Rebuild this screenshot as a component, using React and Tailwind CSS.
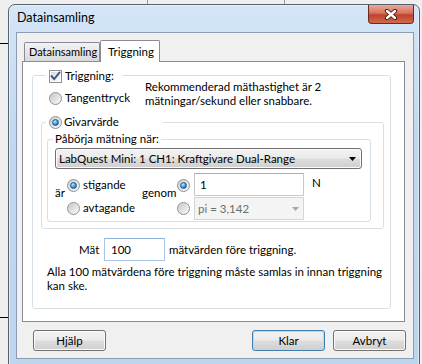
import React from "react";

function Radio({ checked }) {
  return (
    <span className="flex h-[13px] w-[13px] shrink-0 items-center justify-center rounded-full border border-[#8e8f8f] bg-[linear-gradient(135deg,#cfcfcf,#fbfbfb)]">
      {checked ? (
        <span className="h-[7px] w-[7px] rounded-full border border-[#1b5996] bg-[radial-gradient(circle_at_35%_30%,#c4ecff,#3c95dc_55%,#125496)]" />
      ) : (
        <span className="h-[9px] w-[9px] rounded-full bg-[linear-gradient(135deg,#c9c9c9,#f6f6f6)]" />
      )}
    </span>
  );
}

function Checkbox() {
  return (
    <span className="flex h-[13px] w-[13px] shrink-0 items-center justify-center border border-[#8e8f8f] bg-white">
      <span className="relative h-[9px] w-[9px] bg-[linear-gradient(135deg,#d8d8d8,#fbfbfb)]">
        <svg className="absolute left-[-1px] top-[-1px]" width="11" height="11" viewBox="0 0 11 11">
          <path d="M1.6 5.2 L4.2 8 L9.4 1.6" fill="none" stroke="#3d5689" strokeWidth="1.9" strokeLinecap="square" />
        </svg>
      </span>
    </span>
  );
}

function Button({ children, def }) {
  return (
    <div
      className={
        "flex h-[21px] w-[73px] items-center justify-center rounded-[3px] border bg-[linear-gradient(180deg,#f2f2f2_0%,#ebebeb_48%,#dddddd_52%,#cfcfcf_100%)] leading-[14px] " +
        (def
          ? "border-[#3c7fb1] shadow-[inset_0_0_0_1px_#a6e1fb]"
          : "border-[#707070] shadow-[inset_0_0_0_1px_#fbfbfb]")
      }
    >
      {children}
    </div>
  );
}

export default function App() {
  return (
    <div className="relative h-[364px] w-[422px] overflow-hidden whitespace-nowrap bg-[#efefef] text-[11.5px] text-black [font-family:Lato,sans-serif]">
      <div className="absolute left-[147px] top-0 h-[5px] w-px bg-[#9a9a9a]" />
      <div className="absolute left-[284px] top-0 h-[5px] w-px bg-[#9a9a9a]" />
      <div className="absolute left-0 top-[43px] h-px w-[8px] bg-black" />
      <div className="absolute left-0 top-[317px] h-px w-[8px] bg-black" />

      <div className="absolute left-[8px] top-[4px] flex h-[362px] w-[412px] flex-col rounded-t-[7px] border border-[#56626f] bg-[linear-gradient(180deg,#d4e5f7_0%,#c3d8f0_35%,#bed5ee_100%)] pl-[7px] pr-[5px] shadow-[inset_0_0_0_1px_rgba(255,255,255,0.45)]">
        <div className="flex h-[27px] items-start justify-between">
          <span className="pl-[1px] pt-[5px] text-[12.5px] leading-[16px]">Datainsamling</span>
          <div className="flex h-[19px] w-[46px] items-center justify-center rounded-b-[4px] border border-t-0 border-[#6a2a20] bg-[linear-gradient(180deg,#e9a99a_0%,#d7735e_45%,#c0412b_55%,#d06a4f_100%)]">
            <svg width="14" height="11" viewBox="0 0 14 11">
              <path d="M3 2 L11 9 M11 2 L3 9" stroke="#3a1812" strokeWidth="4.2" strokeLinecap="round" />
              <path d="M3 2 L11 9 M11 2 L3 9" stroke="#ffffff" strokeWidth="2.4" strokeLinecap="round" />
            </svg>
          </div>
        </div>

        <div className="flex h-[327px] flex-col border border-[#8d9db1] bg-[#f0f0f0] pt-[7px]">
          {/* tabs */}
          <div className="flex h-[21px] items-end pl-[7px]">
            <div className="flex h-[19px] w-[76px] items-center overflow-hidden rounded-t-[2px] border border-b-0 border-[#898c95] bg-[linear-gradient(180deg,#f3f3f3,#e6e6e6_50%,#d9d9d9)] pl-[4px] text-[11px] leading-[14px]">
              Datainsamling
            </div>
            <div className="relative z-10 mb-[-1px] flex h-[22px] w-[60px] items-center rounded-t-[2px] border border-b-0 border-[#898c95] bg-white pl-[7px] leading-[14px]">
              Triggning
            </div>
          </div>

          {/* panel */}
          <div className="ml-[5px] h-[261px] w-[383px] border border-[#898c95] bg-white">
            <div className="relative ml-[9px] mt-[13px] h-[234px] w-[359px] rounded-[3px] border border-[#d5dfe5]">
              <div className="absolute left-[13px] top-[-7px] flex h-[14px] items-center gap-[3px] bg-white pl-[3px] pr-[8px] leading-[14px]">
                <Checkbox />
                <span>Triggning:</span>
              </div>

              <div className="mt-[4px] flex">
                <div className="ml-[16px] mt-[11px] flex h-[14px] w-[96px] items-center gap-[3px] leading-[14px]">
                  <Radio />
                  <span>Tangenttryck</span>
                </div>
                <div className="leading-[14px]">
                  Rekommenderad mäthastighet är 2
                  <br />
                  mätningar/sekund eller snabbare.
                </div>
              </div>

              <div className="relative ml-[8px] mt-[14px] h-[107px] w-[343px] rounded-[3px] border border-[#d5dfe5]">
                <div className="absolute left-[4px] top-[-8px] flex h-[14px] w-[117px] items-center gap-[2px] bg-white pl-[3px] leading-[14px]">
                  <Radio checked />
                  <span>Givarvärde</span>
                </div>

                <div className="relative ml-[5px] mt-[16px] h-[83px] w-[324px] rounded-[3px] border border-[#d5dfe5]">
                  <div className="absolute left-[5px] top-[-8px] h-[14px] bg-white px-[2px] leading-[14px]">
                    Påbörja mätning när:
                  </div>

                  <div className="ml-[7px] mt-[8px] flex h-[21px] w-[307px] items-center justify-between rounded-[3px] border border-[#707070] bg-[linear-gradient(180deg,#f2f2f2_0%,#ebebeb_48%,#dddddd_52%,#cfcfcf_100%)] pl-[3px] pr-[5px] leading-[14px] shadow-[inset_0_0_0_1px_#fbfbfb]">
                    <span>LabQuest Mini: 1 CH1: Kraftgivare Dual-Range</span>
                    <svg width="7" height="4" viewBox="0 0 7 4">
                      <path d="M0 0 H7 L3.5 4 Z" fill="#000" />
                    </svg>
                  </div>

                  <div className="mt-[4px] flex h-[47px]">
                    <div className="ml-[7px] mt-[13px] w-[12px] leading-[14px]">är</div>
                    <div className="flex w-[75px] flex-col">
                      <div className="mt-[5px] flex h-[14px] items-center gap-[3px] leading-[14px]">
                        <Radio checked />
                        <span>stigande</span>
                      </div>
                      <div className="mt-[9px] flex h-[14px] items-center gap-[3px] leading-[14px]">
                        <Radio />
                        <span>avtagande</span>
                      </div>
                    </div>
                    <div className="mt-[13px] w-[35px] leading-[14px]">genom</div>
                    <div className="flex w-[17px] flex-col">
                      <div className="mt-[5px] flex h-[14px] items-center">
                        <Radio checked />
                      </div>
                      <div className="mt-[9px] flex h-[14px] items-center">
                        <Radio />
                      </div>
                    </div>
                    <div className="flex w-[110px] flex-col">
                      <div className="flex h-[23px] items-center border border-[#c5c8cc] border-t-[#abadb3] bg-white pl-[5px] leading-[14px]">
                        1
                      </div>
                      <div className="mt-[1px] flex h-[23px] items-center justify-between border border-[#d3d5d8] bg-[#f4f4f4] pl-[3px] pr-[4px] leading-[14px] text-[#6d6d6d]">
                        <span>pi = 3,142</span>
                        <svg width="7" height="4" viewBox="0 0 7 4">
                          <path d="M0 0 H7 L3.5 4 Z" fill="#a8a8a8" />
                        </svg>
                      </div>
                    </div>
                    <div className="ml-[8px] mt-[3px] leading-[14px]">N</div>
                  </div>
                </div>
              </div>

              <div className="mt-[9px] flex h-[23px] items-center">
                <span className="ml-[46px] w-[25px] leading-[14px]">Mät</span>
                <div className="flex h-[23px] w-[61px] items-center border border-[#a9c4e4] border-t-[#8fb0d8] bg-white pl-[6px] leading-[14px]">
                  100
                </div>
                <span className="ml-[4px] leading-[14px]">mätvärden före triggning.</span>
              </div>

              <div className="ml-[14px] mt-[4px] leading-[14px]">
                Alla 100 mätvärdena före triggning måste samlas in innan triggning
                <br />
                kan ske.
              </div>
            </div>
          </div>

          {/* buttons */}
          <div className="mt-[8px] flex justify-between pl-[16px] pr-[7px]">
            <Button>Hjälp</Button>
            <div className="flex gap-[8px]">
              <Button def>Klar</Button>
              <Button>Avbryt</Button>
            </div>
          </div>
        </div>
      </div>
    </div>
  );
}
